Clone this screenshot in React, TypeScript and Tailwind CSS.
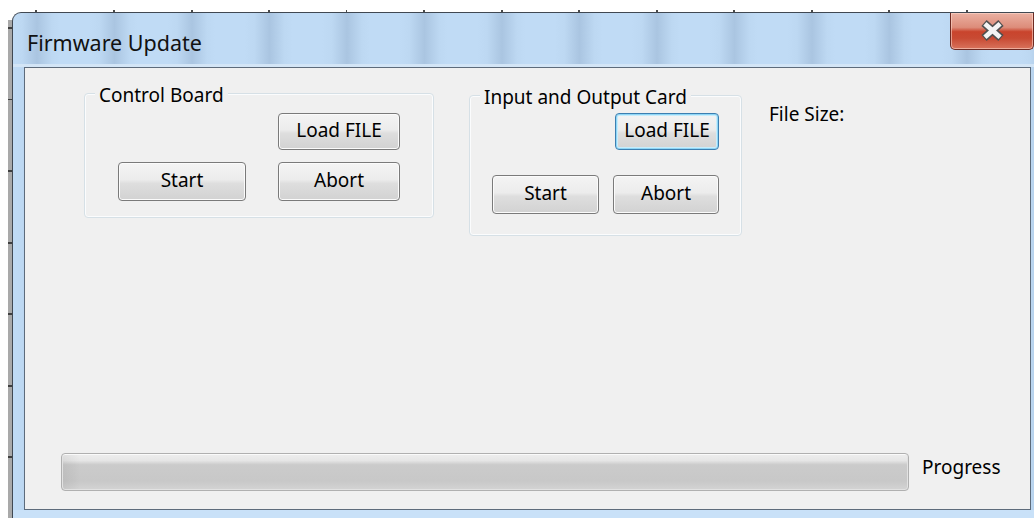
import React from "react";

const font = { fontFamily: '"Noto Sans", "Open Sans", Arial, sans-serif' };

function WinButton({
  label,
  className,
  focused = false,
}: {
  label: string;
  className: string;
  focused?: boolean;
}) {
  return (
    <button
      type="button"
      className={
        "flex items-center justify-center rounded-[4px] border text-[19px] leading-none text-black " +
        "[background-image:linear-gradient(180deg,#f4f4f4_0%,#ececec_45%,#dedede_55%,#d2d2d2_100%)] " +
        (focused
          ? "border-[#3c7fb1] shadow-[inset_0_0_0_1px_#8fd6f6,inset_0_0_0_2px_#c8ecfb] "
          : "border-[#7a7a7a] shadow-[inset_0_0_0_1px_#fbfbfb] ") +
        className
      }
    >
      <span className="-mt-[1px]">{label}</span>
    </button>
  );
}

function GroupBox({
  title,
  className,
  children,
}: {
  title: string;
  className: string;
  children: React.ReactNode;
}) {
  return (
    <div
      className={
        "relative rounded-[4px] border border-[#d6e0e6] shadow-[inset_0_0_0_1px_#fbfcfd] " +
        className
      }
    >
      <span className="absolute -top-[11px] left-[10px] bg-[#f0f0f0] px-[4px] text-[19px] leading-[24px] text-black">
        {title}
      </span>
      {children}
    </div>
  );
}

function CloseGlyph() {
  return (
    <svg width="27" height="21" viewBox="0 0 27 21">
      <g strokeLinecap="butt">
        <line x1="5" y1="3" x2="22" y2="18" stroke="#505050" strokeWidth="8" />
        <line x1="22" y1="3" x2="5" y2="18" stroke="#505050" strokeWidth="8" />
        <line x1="5.9" y1="3.8" x2="21.1" y2="17.2" stroke="#f4f4f4" strokeWidth="4.8" />
        <line x1="21.1" y1="3.8" x2="5.9" y2="17.2" stroke="#f4f4f4" strokeWidth="4.8" />
      </g>
    </svg>
  );
}

export default function App() {
  return (
    <div
      className="flex h-[518px] w-[1034px] overflow-hidden bg-white"
      style={font}
    >
      {/* shadow strip to the left of the window */}
      <div className="flex w-[12px] shrink-0 flex-col pl-[8px] pt-[20px]">
        <div className="w-[4px] flex-1 [background-image:repeating-linear-gradient(180deg,#a9a9a9_0px,#a9a9a9_7px,#3f3f3f_7px,#3f3f3f_9px,#a9a9a9_9px,#a9a9a9_71.5px)]" />
      </div>

      {/* window */}
      <div className="flex w-[1030px] shrink-0 flex-col pt-[10px]">
        {/* tick marks peeking above the frame */}
        <div className="h-[2px] [background-image:repeating-linear-gradient(90deg,transparent_0px,transparent_24.5px,#4a4a4a_24.5px,#4a4a4a_26.5px,transparent_26.5px,transparent_77.5px)] [background-position:-1px_0]" />
        <div className="flex h-[520px] flex-col overflow-hidden rounded-tl-[9px] border-l border-t border-[#404852] bg-[#c2dcf5] [background-image:repeating-linear-gradient(90deg,#c0dbf5_0px,#bdd8f2_10px,#aac5e1_25px,#bdd8f2_40px,#c0dbf5_48px,#c0dbf5_77.5px)] [background-position:-1px_0]">
          {/* title bar */}
          <div className="flex h-[54px] shrink-0 items-start border-b-[3px] border-[#d3e5f6]">
            <div className="flex-1 pl-[14px] pt-[17px] text-[21.5px] leading-[26px] text-[#111]">
              Firmware Update
            </div>
            <div className="mr-[8px] flex h-[37px] w-[84px] items-center justify-center rounded-b-[5px] border border-t-0 border-[#6e2a22] shadow-[inset_0_0_0_1px_rgba(255,220,210,0.55)] [background-image:linear-gradient(180deg,#eab0a2_0%,#dd8c7a_40%,#c9442d_52%,#c84a33_70%,#d9735c_100%)]">
              <CloseGlyph />
            </div>
          </div>

          {/* client area row */}
          <div className="flex shrink-0 pl-[11px]">
            <div className="flex h-[443px] w-[1007px] flex-col border border-[#5d6b7b] bg-[#f0f0f0]">
              <div className="flex items-start pl-[59px] pt-[25px]">
                <GroupBox title="Control Board" className="h-[125px] w-[350px]">
                  <div className="flex flex-col pl-[33px] pt-[19px]">
                    <div className="flex pl-[160px]">
                      <WinButton label="Load FILE" className="h-[37px] w-[122px]" />
                    </div>
                    <div className="mt-[12px] flex">
                      <WinButton label="Start" className="h-[39px] w-[128px]" />
                      <WinButton label="Abort" className="ml-[32px] h-[39px] w-[122px]" />
                    </div>
                  </div>
                </GroupBox>

                <GroupBox title="Input and Output Card" className="ml-[35px] mt-[2px] h-[141px] w-[273px]">
                  <div className="flex flex-col pl-[22px] pt-[17px]">
                    <div className="flex pl-[123px]">
                      <WinButton label="Load FILE" focused className="h-[37px] w-[104px]" />
                    </div>
                    <div className="mt-[25px] flex">
                      <WinButton label="Start" className="h-[39px] w-[107px]" />
                      <WinButton label="Abort" className="ml-[14px] h-[39px] w-[106px]" />
                    </div>
                  </div>
                </GroupBox>

                <div className="ml-[27px] mt-[9px] text-[19px] leading-[24px] text-black">
                  File Size:
                </div>
              </div>

              <div className="flex-1" />

              <div className="flex items-start pb-[18px] pl-[36px]">
                <div className="h-[38px] w-[848px] rounded-[4px] border border-[#b0b0b0] shadow-[inset_0_1px_0_#fafafa,inset_0_0_0_1px_#e2e2e2] [background-image:linear-gradient(90deg,rgba(0,0,0,0.06)_0px,rgba(0,0,0,0)_18px),linear-gradient(180deg,#eeeeee_0%,#e6e6e6_18%,#cbcbcb_30%,#c8c8c8_75%,#d4d4d4_100%)]" />
                <div className="ml-[13px] mt-[2px] text-[19px] leading-[24px] text-black">Progress</div>
              </div>
            </div>
          </div>

          {/* lower frame */}
          <div className="flex-1 bg-[#c9e1f8]" />
        </div>
      </div>
    </div>
  );
}
